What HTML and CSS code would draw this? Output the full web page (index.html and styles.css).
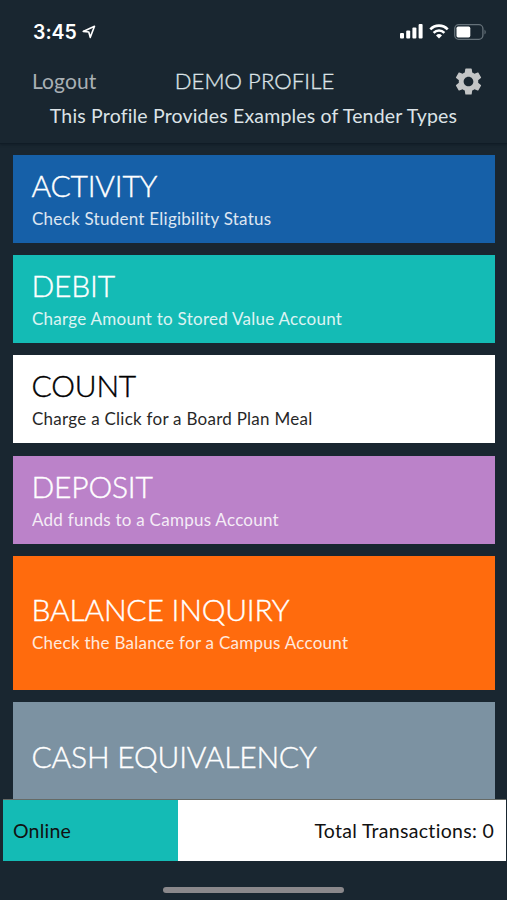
FILE: index.html
```
<!DOCTYPE html>
<html lang="en">
<head>
    <meta charset="utf-8">
    <title>Demo Profile</title>
    <link rel="stylesheet" href="styles.css">
</head>
<body>
    <div class="screen">

        <header class="header">
            <div class="status">
                <span class="time">3:45</span>
                <svg class="location" viewBox="0 0 14 14" width="14" height="14"><path d="M1.2 6.4 L12.5 1.3 L8.2 12.4 L6.8 7 Z" fill="none" stroke="#fff" stroke-width="1.6" stroke-linejoin="round"/></svg>
                <div class="status-icons">
                    <svg viewBox="0 0 23 15" width="23" height="15" fill="#fff">
                        <rect x="0" y="9" width="4" height="5.5" rx="1"/>
                        <rect x="6.2" y="6.5" width="4" height="8" rx="1"/>
                        <rect x="12.4" y="3.5" width="4" height="11" rx="1"/>
                        <rect x="18.6" y="0" width="4" height="14.5" rx="1"/>
                    </svg>
                    <svg viewBox="0 0 20 15" width="20" height="15">
                        <path d="M1.3 5.4 C6 .4 14 .4 18.7 5.4" fill="none" stroke="#fff" stroke-width="2.6"/>
                        <path d="M4.6 8.8 C7.6 5.7 12.4 5.7 15.4 8.8" fill="none" stroke="#fff" stroke-width="2.5"/>
                        <path d="M7 11.4 Q10 8.8 13 11.4 L10 14.5 Z" fill="#fff"/>
                    </svg>
                    <svg class="battery" viewBox="0 0 33 16" width="33" height="16">
                        <rect x=".7" y=".7" width="28.2" height="14.6" rx="4" fill="none" stroke="#66727a" stroke-width="1.3"/>
                        <rect x="2.5" y="2.6" width="13.8" height="10.8" rx="1.6" fill="#fff"/>
                        <path d="M30.5 5.4 Q33 8 30.5 10.6 Z" fill="#66727a"/>
                    </svg>
                </div>
            </div>

            <div class="nav">
                <span class="logout">Logout</span>
                <h1 class="title">DEMO PROFILE</h1>
                <svg class="gear" viewBox="2 2 20 20" width="27" height="27"><path fill="#c3c5c6" d="M19.14 12.94c.04-.3.06-.61.06-.94 0-.32-.02-.64-.07-.94l2.03-1.58c.18-.14.23-.41.12-.61l-1.92-3.32c-.12-.22-.37-.29-.59-.22l-2.39.96c-.5-.38-1.03-.7-1.62-.94l-.36-2.54c-.04-.24-.24-.41-.48-.41h-3.84c-.24 0-.43.17-.47.41l-.36 2.54c-.59.24-1.13.57-1.62.94l-2.39-.96c-.22-.08-.47 0-.59.22L2.74 8.87c-.12.21-.08.47.12.61l2.03 1.58c-.05.3-.09.63-.09.94s.02.64.07.94l-2.03 1.58c-.18.14-.23.41-.12.61l1.92 3.32c.12.22.37.29.59.22l2.39-.96c.5.38 1.03.7 1.62.94l.36 2.54c.05.24.24.41.48.41h3.84c.24 0 .44-.17.47-.41l.36-2.54c.59-.24 1.13-.56 1.62-.94l2.39.96c.22.08.47 0 .59-.22l1.92-3.32c.12-.22.07-.47-.12-.61l-2.01-1.58zM12 15.6c-1.98 0-3.6-1.62-3.6-3.6s1.62-3.6 3.6-3.6 3.6 1.62 3.6 3.6-1.62 3.6-3.6 3.6z"/></svg>
            </div>
            <p class="subtitle">This Profile Provides Examples of Tender Types</p>
        </header>

        <main class="list">
            <div class="card activity">
                <h2 class="name">ACTIVITY</h2>
                <p class="desc">Check Student Eligibility Status</p>
            </div>
            <div class="card debit">
                <h2 class="name">DEBIT</h2>
                <p class="desc">Charge Amount to Stored Value Account</p>
            </div>
            <div class="card count">
                <h2 class="name">COUNT</h2>
                <p class="desc">Charge a Click for a Board Plan Meal</p>
            </div>
            <div class="card deposit">
                <h2 class="name">DEPOSIT</h2>
                <p class="desc">Add funds to a Campus Account</p>
            </div>
            <div class="card tall balance">
                <h2 class="name">BALANCE INQUIRY</h2>
                <p class="desc">Check the Balance for a Campus Account</p>
            </div>
            <div class="card tall cash">
                <h2 class="name">CASH EQUIVALENCY</h2>
            </div>
        </main>

        <footer class="footer">
            <div class="online">Online</div>
            <div class="total">Total Transactions: 0</div>
        </footer>
        <div class="home"><div class="home-bar"></div></div>

    </div>
</body>
</html>
```
FILE: styles.css
```
* {
    box-sizing: border-box;
}

body {
    margin: 0;
    background-color: #192630;
    font-family: Lato, "Liberation Sans", sans-serif;
    font-variant-ligatures: none;
    overflow: hidden;
}

h1, h2, p {
    margin: 0;
    font-weight: 400;
    white-space: nowrap;
}

svg {
    display: block;
    flex-shrink: 0;
}

.screen {
    width: 507px;
    height: 900px;
    display: flex;
    flex-direction: column;
}

/* header */
.header {
    height: 144px;
    flex-shrink: 0;
    border-bottom: 1px solid #101c26;
    box-shadow: 0 1px 2px #121e28;
}

.status {
    display: flex;
    align-items: center;
    height: 63px;
    padding: 0 20px 0 33px;
}

.time {
    width: 44px;
    color: #fff;
    font-family: Inter, sans-serif;
    font-size: 19.5px;
    font-weight: 600;
}

.location {
    margin-left: 5px;
}

.status-icons {
    display: flex;
    align-items: center;
    gap: 5.5px;
    margin-left: auto;
}

.nav {
    display: grid;
    grid-template-columns: 110px 1fr 110px;
    align-items: center;
    height: 37px;
    padding: 0 25px 0 32px;
}

.logout {
    color: #a9b0b4;
    font-size: 21px;
    letter-spacing: .1px;
    padding-bottom: 2px;
}

.title {
    color: #dce3e7;
    font-size: 22px;
    font-weight: 300;
    text-align: center;
    letter-spacing: .1px;
    padding: 0 5px 2px 0;
    -webkit-text-stroke: .35px #dce3e7;
}

.gear {
    justify-self: end;
}

.subtitle {
    color: #dce3e7;
    font-size: 19.5px;
    line-height: 32px;
    text-align: center;
    letter-spacing: .18px;
}

/* tender cards */
.list {
    display: flex;
    flex-direction: column;
    gap: 12.2px;
    height: 655px;
    padding: 11px 12px 0 13px;
    overflow: hidden;
}

.card {
    display: flex;
    flex-direction: column;
    justify-content: center;
    flex-shrink: 0;
    height: 88px;
    padding: 4px 0 0 19px;
    color: #fff;
}

.tall {
    height: 134px;
}

.name {
    font-size: 30px;
    font-weight: 300;
    line-height: 36px;
    margin: -4px 0 4px -.5px;
    letter-spacing: -.2px;
    -webkit-text-stroke: .4px currentColor;
}

.desc {
    font-size: 17px;
    line-height: 24px;
    letter-spacing: .26px;
    opacity: .85;
}

.activity {
    background-color: #1660a8;
}

.debit {
    background-color: #14bbb5;
}

.count {
    background-color: #fff;
    color: #000;
}

.deposit {
    background-color: #bb82c9;
}

.balance {
    background-color: #ff6b0d;
}

.cash {
    background-color: #7c92a2;
    padding-bottom: 22px;
}

/* bottom bar */
.footer {
    display: flex;
    height: 62px;
    margin: 0 1px 0 3px;
    flex-shrink: 0;
    border-top: 1px solid #666a66;
    background-color: #fff;
    color: #111;
    font-size: 19.5px;
    line-height: 61px;
}

.online {
    width: 175px;
    padding-left: 10px;
    background-color: #14bbb5;
    letter-spacing: .2px;
}

.total {
    flex: 1;
    padding-right: 12px;
    text-align: right;
    letter-spacing: .3px;
}

.home {
    display: flex;
    justify-content: center;
    padding-top: 26px;
}

.home-bar {
    width: 181px;
    height: 6px;
    border-radius: 3px;
    background-color: #8a888b;
}
```
